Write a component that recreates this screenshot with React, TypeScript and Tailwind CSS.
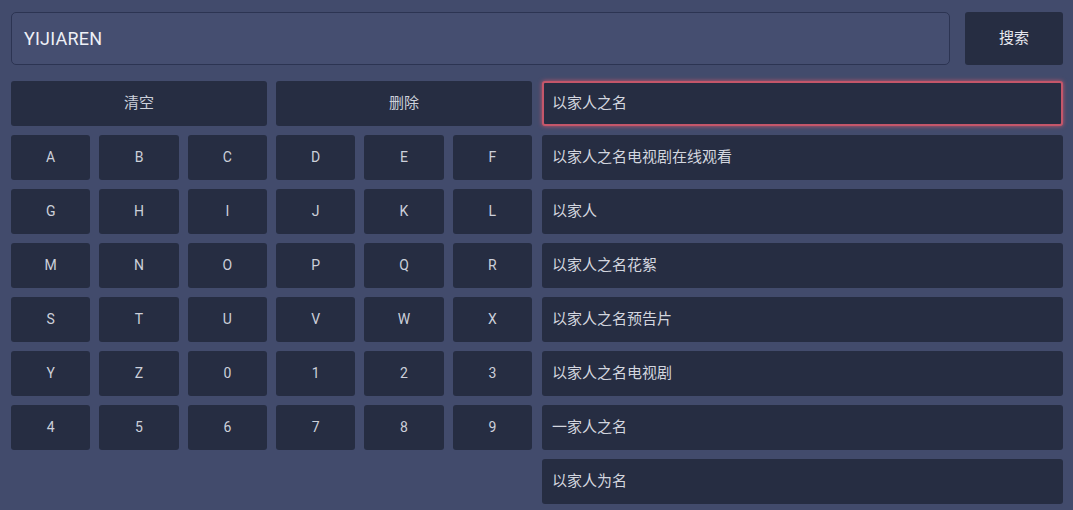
import React, { useState } from 'react';

const keys = [
  'A', 'B', 'C', 'D', 'E', 'F',
  'G', 'H', 'I', 'J', 'K', 'L',
  'M', 'N', 'O', 'P', 'Q', 'R',
  'S', 'T', 'U', 'V', 'W', 'X',
  'Y', 'Z', '0', '1', '2', '3',
  '4', '5', '6', '7', '8', '9',
];

const suggestions = [
  '以家人之名',
  '以家人之名电视剧在线观看',
  '以家人',
  '以家人之名花絮',
  '以家人之名预告片',
  '以家人之名电视剧',
  '一家人之名',
  '以家人为名',
];

const App: React.FC = () => {
  const [query, setQuery] = useState('YIJIAREN');
  const [active] = useState(0);

  return (
    <div
      className="w-[1073px] h-[510px] overflow-hidden bg-[#424b6c] pl-[11px] pr-[10px] pt-[12px]"
      style={{ fontFamily: 'Roboto, "Noto Sans CJK SC", sans-serif' }}
    >
      {/* Search bar */}
      <div className="flex gap-[15px] h-[53px]">
        <div className="flex-1 flex items-center rounded-[5px] border border-[#2c3452] bg-[#454e70] px-[12px]">
          <span className="text-[18px] text-[#eef0f6] tracking-[0.2px]">{query}</span>
        </div>
        <button
          onClick={() => setQuery('')}
          className="w-[98px] rounded-[3px] bg-[#262d42] text-[15px] text-[#e6e8ef]"
        >
          搜索
        </button>
      </div>

      <div className="flex gap-[10px] mt-[16px]">
        {/* Keyboard */}
        <div className="w-[521px] flex flex-col gap-[9px]">
          <div className="grid grid-cols-2 gap-[9px]">
            <button className="h-[45px] rounded-[3px] bg-[#262d42] text-[15px] text-[#ccd0da]">清空</button>
            <button className="h-[45px] rounded-[3px] bg-[#262d42] text-[15px] text-[#ccd0da]">删除</button>
          </div>
          <div className="grid grid-cols-6 gap-[9px]">
            {keys.map((k) => (
              <button
                key={k}
                className="h-[45px] rounded-[3px] bg-[#262d42] text-[14px] text-[#ccd0da]"
              >
                {k}
              </button>
            ))}
          </div>
        </div>

        {/* Suggestions */}
        <div className="flex-1 flex flex-col gap-[9px]">
          {suggestions.map((s, i) => (
            <div
              key={s}
              className={`h-[45px] flex items-center rounded-[3px] bg-[#262d42] text-[15px] text-[#d3d6df] ${
                i === active
                  ? 'border-2 border-[#c4566a] shadow-[0_0_4px_#c4566a] pl-[8px]'
                  : 'pl-[10px]'
              }`}
            >
              {s}
            </div>
          ))}
        </div>
      </div>
    </div>
  );
};

export default App;
